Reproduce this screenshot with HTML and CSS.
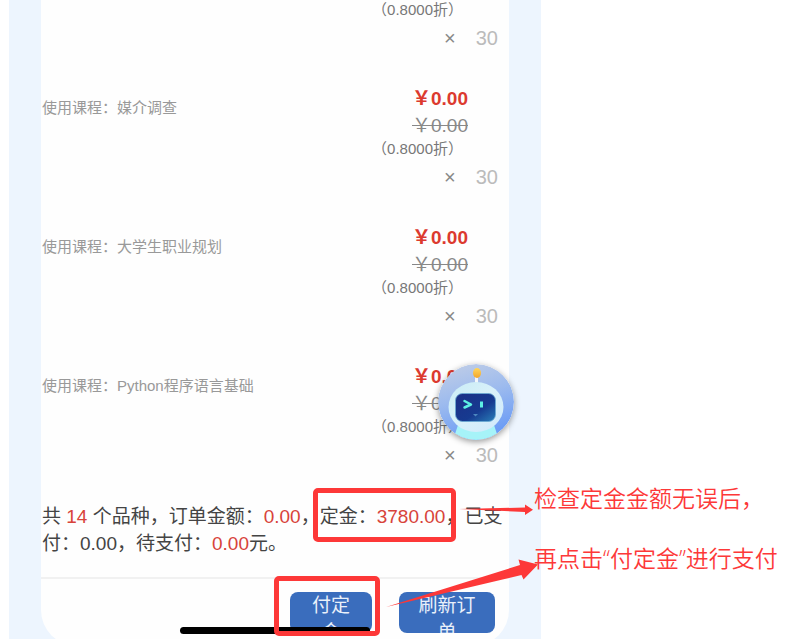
FILE: index.html
```
<!DOCTYPE html>
<html lang="zh-CN">
<head>
  <meta charset="UTF-8">
  <meta name="viewport" content="width=device-width, initial-scale=1.0">
  <title>订单支付</title>
  <link rel="stylesheet" href="styles.css">
</head>
<body>
  <div class="guide">
    <main class="phone">
      <div class="card">
        <ul class="items">
          <li class="item">
            <div class="prices">
              <span class="discount">&#65288;0.8000折&#65289;</span>
              <span class="quantity"><span class="times">×</span>30</span>
            </div>
          </li>
          <li class="item">
            <p class="course">使用课程&#65306;媒介调查</p>
            <div class="prices">
              <strong class="price">&#65509;0.00</strong>
              <del class="old-price">&#65509;0.00</del>
              <span class="discount">&#65288;0.8000折&#65289;</span>
              <span class="quantity"><span class="times">×</span>30</span>
            </div>
          </li>
          <li class="item">
            <p class="course">使用课程&#65306;大学生职业规划</p>
            <div class="prices">
              <strong class="price">&#65509;0.00</strong>
              <del class="old-price">&#65509;0.00</del>
              <span class="discount">&#65288;0.8000折&#65289;</span>
              <span class="quantity"><span class="times">×</span>30</span>
            </div>
          </li>
          <li class="item">
            <p class="course">使用课程&#65306;Python程序语言基础</p>
            <div class="prices">
              <strong class="price">&#65509;0.00</strong>
              <del class="old-price">&#65509;0.00</del>
              <span class="discount">&#65288;0.8000折&#65289;</span>
              <span class="quantity"><span class="times">×</span>30</span>
            </div>
          </li>
        </ul>

        <p class="summary">共 <span class="red">14</span> 个品种&#65292;订单金额&#65306;<span class="red">0.00</span>&#65292;定金&#65306;<span class="red">3780.00</span>&#65292;已支付&#65306;0.00&#65292;待支付&#65306;<span class="red">0.00</span>元。</p>

        <div class="actions">
          <button type="button" class="btn btn-pay">付定金</button>
          <button type="button" class="btn btn-refresh">刷新订单</button>
        </div>
      </div>
      <div class="home-bar"></div>
    </main>

    <svg class="robot" viewBox="0 0 76 76" role="img" aria-label="客服">
      <defs>
        <linearGradient id="sky" x1="0" y1="0" x2="0.3" y2="1">
          <stop offset="0" stop-color="#c3cfe6"/>
          <stop offset="0.5" stop-color="#9dbbee"/>
          <stop offset="1" stop-color="#6d9df5"/>
        </linearGradient>
        <linearGradient id="head" x1="0" y1="0" x2="1" y2="1">
          <stop offset="0" stop-color="#c9ecf5"/>
          <stop offset="0.5" stop-color="#d9f1fa"/>
          <stop offset="1" stop-color="#d0e9fb"/>
        </linearGradient>
        <linearGradient id="screen" x1="0" y1="0" x2="1" y2="1">
          <stop offset="0" stop-color="#1c2f86"/>
          <stop offset="0.6" stop-color="#163a90"/>
          <stop offset="1" stop-color="#2a7fb8"/>
        </linearGradient>
        <linearGradient id="ball" x1="0" y1="0" x2="0" y2="1">
          <stop offset="0" stop-color="#ffd65c"/>
          <stop offset="1" stop-color="#f2a62b"/>
        </linearGradient>
        <clipPath id="round"><circle cx="38" cy="38" r="38"/></clipPath>
      </defs>
      <g clip-path="url(#round)">
        <rect width="76" height="76" fill="url(#sky)"/>
        <path d="M20 61 L15 76 H61 L56 61 Z" fill="#a6f3f8"/>
        <rect x="37" y="12" width="3" height="8" fill="#f3f6fa"/>
        <ellipse cx="39" cy="9" rx="4" ry="5" fill="url(#ball)"/>
        <ellipse cx="38" cy="43" rx="27.5" ry="25" fill="url(#head)"/>
        <rect x="17.5" y="29.5" width="40" height="28" rx="7" fill="url(#screen)" stroke="#69a9d3" stroke-width="0.8"/>
        <path d="M26.5 37 L33 40.5 L26.5 43.5" fill="none" stroke="#5df0e4" stroke-width="2.5" stroke-linecap="round" stroke-linejoin="round"/>
        <path d="M43.5 37.5 V43.5" stroke="#5df0e4" stroke-width="3"/>
        <path d="M35 50 H40 L37.5 52.5 Z" fill="#4d87c0"/>
      </g>
    </svg>

    <div class="frame frame-deposit"></div>
    <div class="frame frame-pay"></div>
    <svg class="arrows" viewBox="0 0 160 110" aria-hidden="true">
      <path d="M75 9 L141 7.5 L141 4.5 L149 9.7 L141 15 L141 12 Z"/>
      <path d="M2 107 L136 65 L134.5 59.5 L154 64.5 L139.5 79.5 L137.5 75 Z"/>
    </svg>
    <p class="note note-check">检查定金金额无误后&#65292;</p>
    <p class="note note-pay">再点击“付定金”进行支付</p>
  </div>
</body>
</html>
```

FILE: styles.css
```
* {
  box-sizing: border-box;
}

body {
  margin: 0;
  background: #fff;
  font-family: "Liberation Sans", "Noto Sans CJK SC", sans-serif;
  overflow: hidden;
}

p, ul {
  margin: 0;
  padding: 0;
}

.guide {
  position: relative;
  min-height: 100vh;
  padding: 0 244px 0 9px;
}

.phone {
  position: relative;
  padding: 0 32px 8px;
  background: #edf5fe;
}

.card {
  background: #fefefe;
  border-radius: 0 0 36px 36px;
}

/* order items */
.items {
  list-style: none;
}

.item {
  display: flex;
  justify-content: space-between;
  padding-bottom: 29px;
}

.item:first-child {
  justify-content: flex-end;
}

.course {
  padding-top: 12px;
  padding-left: 1px;
  font-size: 15px;
  line-height: 22px;
  color: #999;
}

.prices {
  display: flex;
  flex-direction: column;
  align-items: flex-end;
  padding-right: 11px;
}

.price,
.old-price {
  margin-right: 30px;
  font-size: 19px;
}

.price {
  line-height: 28px;
  color: #dc3a2f;
}

.old-price {
  line-height: 26px;
  color: #888;
}

.discount {
  margin-right: 35px;
  font-size: 15px;
  line-height: 20px;
  color: #777;
}

.quantity {
  font-size: 20px;
  line-height: 36px;
  color: #bbb;
}

.times {
  margin-right: 20px;
  color: #888;
}

.summary {
  padding: 1px 0 20px 1px;
  font-size: 19px;
  line-height: 27px;
  color: #444;
}

.red {
  color: #d8433a;
}

.actions {
  display: flex;
  justify-content: flex-end;
  gap: 27px;
  padding: 13px 14px 13px 0;
  border-top: 2px solid #f1f1f1;
}

.btn {
  height: 41px;
  padding: 0 17px;
  border: none;
  border-radius: 8px;
  background: #3a6dbd;
  color: #e9f0fa;
  font-family: inherit;
  font-size: 19px;
  line-height: 27px;
  overflow: hidden;
  display: flex;
  justify-content: center;
  align-items: flex-start;
  cursor: pointer;
}

.btn-pay {
  width: 82px;
}

.btn-refresh {
  width: 96px;
}

.home-bar {
  position: absolute;
  left: 171px;
  right: 171px;
  top: 627px;
  height: 7px;
  border-radius: 4px;
  background: #000;
}

/* floating assistant */
.robot {
  position: absolute;
  top: 364px;
  right: 271px;
  width: 76px;
  height: 76px;
  border-radius: 50%;
  box-shadow: 0 2px 6px rgba(0, 0, 0, 0.4);
}

/* marks drawn over the phone */
.frame {
  position: absolute;
  border: 5px solid #fd3838;
  border-radius: 5px;
}

.frame-deposit {
  top: 488px;
  right: 329px;
  width: 143px;
  height: 54px;
}

.frame-pay {
  top: 576px;
  right: 405px;
  width: 106px;
  height: 60px;
}

.arrows {
  position: absolute;
  top: 500px;
  right: 241px;
  width: 160px;
  height: 110px;
  fill: #fd3838;
}

.note {
  position: absolute;
  right: 0;
  width: 251px;
  font-family: "Open Sans", "Noto Sans CJK SC", sans-serif;
  font-size: 23px;
  font-weight: 350;
  line-height: 32px;
  color: #fd3838;
  white-space: nowrap;
}

.note-check {
  top: 482px;
}

.note-pay {
  top: 542px;
}
```
